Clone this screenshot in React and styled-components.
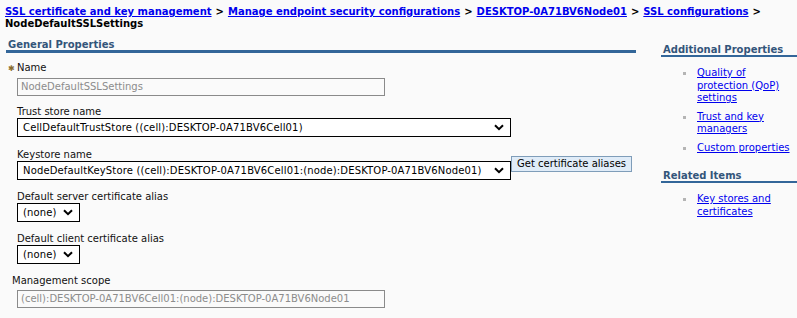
import React from 'react';
import styled, { createGlobalStyle } from 'styled-components';

const GlobalStyle = createGlobalStyle`
  body {
    margin: 0;
    background: #fafafa;
    font-family: 'DejaVu Sans', Verdana, sans-serif;
    font-size: 10px;
    line-height: 12px;
    color: #000;
  }
`;

const Page = styled.div`
  padding: 6px 0 0 5px;
  width: 792px;
`;

const Crumbs = styled.div`
  font-weight: bold;
  line-height: 12px;
  color: #000;

  a {
    color: #0000ee;
    text-decoration: underline;
  }

  .sep {
    color: #000;
    margin: 0 4px;
  }
`;

const Columns = styled.div`
  display: flex;
  margin-top: 9px;
`;

const Main = styled.div`
  width: 630px;
  padding-left: 1px;
`;

const Side = styled.div`
  margin-left: 25px;
  flex: 1;
  padding-top: 5px;
`;

const SectionHead = styled.div`
  font-weight: bold;
  color: #33557a;
  padding-left: 2px;
  border-bottom: ${(p) => p.$bar || 2}px solid #336699;
  line-height: 11px;
`;

const Form = styled.div`
  padding-top: 9px;
`;

const Field = styled.div`
  padding-left: ${(p) => p.$indent}px;
  margin-bottom: ${(p) => p.$gap}px;
`;

const Label = styled.div`
  color: #111;
  line-height: 12px;
  margin-bottom: ${(p) => p.$space || 0}px;
`;

const Star = styled.span`
  display: inline-block;
  color: #8a6d2f;
  font-size: 8px;
  width: 9px;
  margin-left: -9px;
`;

const TextBox = styled.div`
  box-sizing: border-box;
  width: ${(p) => p.$w}px;
  height: 18px;
  border: 1px solid #8a8a8a;
  background: #fafafa;
  color: #8c8c8c;
  padding: 0 3px;
  line-height: 16px;
  white-space: nowrap;
  overflow: hidden;
`;

const Row = styled.div`
  display: flex;
  align-items: flex-start;
`;

const Select = styled.div`
  box-sizing: border-box;
  display: flex;
  align-items: center;
  justify-content: space-between;
  width: ${(p) => (p.$w ? `${p.$w}px` : 'auto')};
  height: 19px;
  border: 1px solid #000;
  background: #fff;
  padding: 0 6px 0 5px;
  letter-spacing: 0.15px;
  white-space: nowrap;
  gap: 6px;
`;

const Chevron = () => (
  <svg width="10" height="7" viewBox="0 0 10 7">
    <path d="M1 1.2 L5 5.2 L9 1.2" fill="none" stroke="#000" strokeWidth="2" />
  </svg>
);

const Button = styled.div`
  box-sizing: border-box;
  height: 16px;
  margin-top: -5px;
  padding: 0 5px;
  border: 1px solid #7f9db9;
  background: #e0ecf8;
  line-height: 14px;
  white-space: nowrap;
`;

const LinkList = styled.ul`
  list-style: none;
  margin: 0;
  padding: ${(p) => p.$top}px 0 ${(p) => p.$bottom}px 22px;

  li {
    position: relative;
    padding-left: 14px;
    margin-bottom: 6px;
    line-height: 12.5px;
    width: 95px;
  }

  li::before {
    content: '';
    position: absolute;
    left: 0;
    top: 5px;
    width: 3px;
    height: 3px;
    background: #b4b4b4;
  }

  a {
    color: #0000ee;
    text-decoration: underline;
  }
`;

const App = () => (
  <>
    <GlobalStyle />
    <Page>
      <Crumbs>
        <a href="#">SSL certificate and key management</a>
        <span className="sep">&gt;</span>
        <a href="#">Manage endpoint security configurations</a>
        <span className="sep">&gt;</span>
        <a href="#">DESKTOP-0A71BV6Node01</a>
        <span className="sep">&gt;</span>
        <a href="#">SSL configurations</a>
        <span className="sep">&gt;</span>
        <br />
        NodeDefaultSSLSettings
      </Crumbs>

      <Columns>
        <Main>
          <SectionHead $bar={3}>General Properties</SectionHead>
          <Form>
            <Field $indent={11} $gap={10}>
              <Label $space={3}>
                <Star>✱</Star>Name
              </Label>
              <TextBox $w={368}>NodeDefaultSSLSettings</TextBox>
            </Field>

            <Field $indent={11} $gap={12}>
              <Label>Trust store name</Label>
              <Select $w={494}>
                <span>CellDefaultTrustStore ((cell):DESKTOP-0A71BV6Cell01)</span>
                <Chevron />
              </Select>
            </Field>

            <Field $indent={11} $gap={11}>
              <Label>Keystore name</Label>
              <Row>
                <Select $w={494}>
                  <span>NodeDefaultKeyStore ((cell):DESKTOP-0A71BV6Cell01:(node):DESKTOP-0A71BV6Node01)</span>
                  <Chevron />
                </Select>
                <Button>Get certificate aliases</Button>
              </Row>
            </Field>

            <Field $indent={11} $gap={11}>
              <Label>Default server certificate alias</Label>
              <Row>
                <Select>
                  <span>(none)</span>
                  <Chevron />
                </Select>
              </Row>
            </Field>

            <Field $indent={11} $gap={11}>
              <Label>Default client certificate alias</Label>
              <Row>
                <Select>
                  <span>(none)</span>
                  <Chevron />
                </Select>
              </Row>
            </Field>

            <Field $indent={6} $gap={0}>
              <Label $space={3}>Management scope</Label>
              <Field $indent={5} $gap={0}>
                <TextBox $w={368}>
                  (cell):DESKTOP-0A71BV6Cell01:(node):DESKTOP-0A71BV6Node01
                </TextBox>
              </Field>
            </Field>
          </Form>
        </Main>

        <Side>
          <SectionHead>Additional Properties</SectionHead>
          <LinkList $top={10} $bottom={10}>
            <li>
              <a href="#">Quality of protection (QoP) settings</a>
            </li>
            <li>
              <a href="#">Trust and key managers</a>
            </li>
            <li>
              <a href="#">Custom properties</a>
            </li>
          </LinkList>
          <SectionHead>Related Items</SectionHead>
          <LinkList $top={10} $bottom={0}>
            <li>
              <a href="#">Key stores and certificates</a>
            </li>
          </LinkList>
        </Side>
      </Columns>
    </Page>
  </>
);

export default App;
